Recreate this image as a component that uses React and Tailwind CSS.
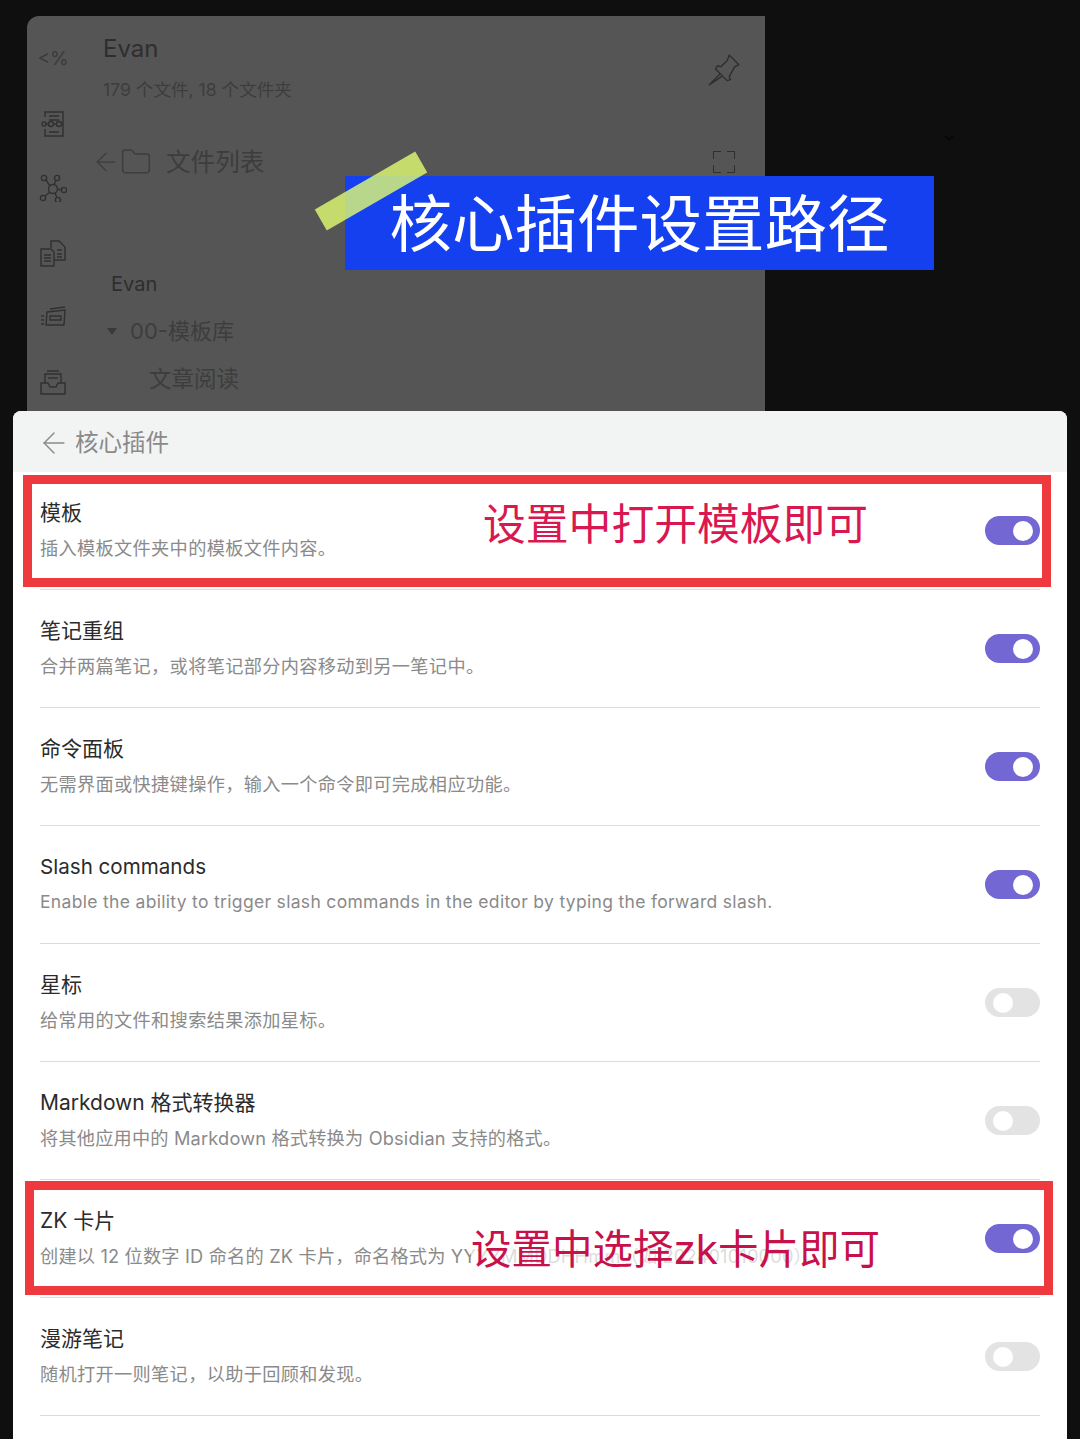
import React from "react";
import { ArrowLeft, Folder, ChevronDown } from "lucide-react";

const FONT = "font-['Inter','Noto_Sans_CJK_SC',sans-serif]";

const plugins = [
  { title: "模板", desc: "插入模板文件夹中的模板文件内容。", on: true },
  { title: "笔记重组", desc: "合并两篇笔记，或将笔记部分内容移动到另一笔记中。", on: true },
  { title: "命令面板", desc: "无需界面或快捷键操作，输入一个命令即可完成相应功能。", on: true },
  {
    title: "Slash commands",
    desc: "Enable the ability to trigger slash commands in the editor by typing the forward slash.",
    on: true,
    latin: true,
  },
  { title: "星标", desc: "给常用的文件和搜索结果添加星标。", on: false },
  { title: "Markdown 格式转换器", desc: "将其他应用中的 Markdown 格式转换为 Obsidian 支持的格式。", on: false, mixed: true },
  { title: "ZK 卡片", desc: "创建以 12 位数字 ID 命名的 ZK 卡片，命名格式为 YYYYMMDDHHmm（如 202401010000）。", on: true, mixed: true },
  { title: "漫游笔记", desc: "随机打开一则笔记，以助于回顾和发现。", on: false },
];

const Toggle = ({ on }) => (
  <div
    className={`flex h-[29px] w-[55px] shrink-0 items-center rounded-full ${
      on ? "justify-end bg-[#7367d3] pr-[7px]" : "justify-start bg-[#e3e3e3] pl-2"
    }`}
  >
    <div className="h-5 w-5 rounded-full bg-white" />
  </div>
);

const PluginRow = ({ title, desc, on, latin, mixed }) => {
  let descSize = "text-[18.2px] tracking-[0.33px]";
  if (latin) descSize = "text-[17.5px] tracking-[0.32px]";
  if (mixed) descSize = "text-[18.2px] tracking-[0.19px]";

  return (
    <div className="flex h-[118px] items-center justify-between border-b border-[#dcdcdc]">
      <div className="flex flex-col gap-[5px]">
        <div className={`leading-[30px] text-[#2b2b2b] ${latin ? "text-[20.6px]" : "text-[21px]"}`}>{title}</div>
        <div className={`leading-[30px] text-[#8a8a8a] ${descSize}`}>{desc}</div>
      </div>
      <Toggle on={on} />
    </div>
  );
};

// sidebar icons, the templater one is plain text
const IconBase = ({ children }) => (
  <svg viewBox="0 0 28 28" className="h-7 w-7" fill="none" stroke="#303030" strokeWidth="1.4">
    {children}
  </svg>
);

const sidebarIcons = [
  <IconBase key="doc">
    <path d="M6 8V3h18v24H6v-7" />
    <path d="M10 7h10M10 11h10M10 23h10" />
    <circle cx="5" cy="15" r="2" />
    <circle cx="12" cy="15" r="2.5" />
    <circle cx="20" cy="15" r="2.5" />
    <path d="M7 15h2.5M14.5 15h3" />
  </IconBase>,
  <IconBase key="graph">
    <circle cx="14" cy="15" r="4.5" />
    <circle cx="5" cy="4" r="2.6" />
    <circle cx="18" cy="4" r="2.6" />
    <circle cx="4" cy="24" r="2.6" />
    <circle cx="25" cy="16" r="2.6" />
    <circle cx="19" cy="26" r="2.6" />
    <path d="M7 6l4 6M17 6.500l-2 4M6 22l5-4M18.500 15.500h4M16 19l2 4.500" />
  </IconBase>,
  <IconBase key="files">
    <path d="M2 10h10l3 3v14H2z" />
    <path d="M12 9V2h8l6 6v13H15" />
    <path d="M5 16h7M5 19h7M5 22h7M18 11h5M18 15h5M18 18h5" />
  </IconBase>,
  <IconBase key="cards">
    <path d="M8 8l18-2-1 15H7z" />
    <path d="M11 5l15-2" />
    <path d="M11 12h11v4H11z" />
    <path d="M2 12h3M2 16h3M2 20h3" />
  </IconBase>,
  <IconBase key="inbox">
    <path d="M6 14V5h16v9M8 2h12" />
    <path d="M2 14h7l2 4h6l2-4h7v11H2z" />
    <path d="M9 9h10" />
  </IconBase>,
];

const PushPin = () => (
  <svg viewBox="0 0 32 32" className="mt-[20px] h-[34px] w-[34px]" fill="none" stroke="#2e2e2e" strokeWidth="1.3" strokeLinejoin="round">
    <path d="M21 2l9 9-4 2-5 9 1 3-3 1L8 15l2-3 3 1 6-6z" />
    <path d="M12 20L2 30l12-8" />
  </svg>
);

const App = () => {
  return (
    <div className={`${FONT} relative h-[1439px] w-[1080px] overflow-hidden bg-[#0f0f10]`}>
      {/* dimmed file explorer behind the sheet */}
      <div className="h-[411px] pl-[27px] pt-4">
        <div className="flex h-[395px] w-[738px] rounded-tl-xl bg-[#555555] text-[#2e2e2e]">
          <div className="flex w-[52px] flex-col items-center pt-[28px]">
            <div className="flex h-[30px] items-center text-[19px] text-[#3a3a3a]">&lt;%</div>
            <div className="mt-[35px] flex flex-col gap-[37px]">{sidebarIcons}</div>
          </div>

          <div className="flex flex-1 flex-col">
            <div className="flex items-start justify-between pl-6 pr-6 pt-[17px]">
              <div>
                <div className="text-[24px] leading-8">Evan</div>
                <div className="mt-[13px] text-[17.600px] leading-6 text-[#3d3d3d]">179 个文件, 18 个文件夹</div>
              </div>
              <PushPin />
            </div>

            <div className="mt-[44px] flex items-center justify-between pl-[12px] pr-[30px]">
              <div className="flex items-center text-[#3d3d3d]">
                <ArrowLeft className="h-[30px] w-[30px]" strokeWidth={1} />
                <Folder className="-ml-[1px] h-8 w-8" strokeWidth={1.1} />
                <span className="ml-[14px] text-[24.600px] leading-8">文件列表</span>
              </div>
              <div className="grid h-[22px] w-[22px] grid-cols-2 grid-rows-2 gap-[6px]">
                <div className="border-l border-t border-[#2e2e2e]" />
                <div className="border-r border-t border-[#2e2e2e]" />
                <div className="border-b border-l border-[#2e2e2e]" />
                <div className="border-b border-r border-[#2e2e2e]" />
              </div>
            </div>

            <div className="mt-[92px] pl-[32px] text-[20px] leading-7">Evan</div>
            <div className="mt-[19px] flex items-center pl-7 text-[22px] leading-7 text-[#3d3d3d]">
              <div className="h-0 w-0 border-x-[5px] border-t-[7px] border-x-transparent border-t-[#3a3a3a]" />
              <span className="ml-[13px]">00-模板库</span>
            </div>
            <div className="mt-5 pl-[70px] text-[22.500px] leading-7 text-[#3d3d3d]">文章阅读</div>
          </div>
        </div>
      </div>

      <ChevronDown className="absolute left-[941px] top-[130px] h-4 w-4 text-[#050505]" strokeWidth={2} />

      {/* core plugins sheet */}
      <div className="ml-[13px] h-[1028px] w-[1054px] overflow-hidden rounded-t-lg bg-white">
        <div className="flex h-[61px] items-center gap-1 bg-[#f2f3f3] pl-[24px] pt-[3px] text-[#8a8a8a]">
          <ArrowLeft className="h-[34px] w-[34px]" strokeWidth={1} />
          <span className="text-[23.500px]">核心插件</span>
        </div>
        <div className="px-[27px]">
          {plugins.map((p) => (
            <PluginRow key={p.title} {...p} />
          ))}
        </div>
      </div>

      {/* annotations on top of the screenshot */}
      <div className="absolute left-[345px] top-[176px] flex h-[94px] w-[589px] items-center justify-center bg-[#1440f0] pt-[2px] text-[62.500px] leading-none text-white">
        核心插件设置路径
      </div>
      <div className="absolute left-[313px] top-[179px] h-6 w-[116px] -rotate-[30deg] bg-[#e1fc72]/80" />

      <div className="absolute left-[23px] top-[475px] flex h-[112px] w-[1028px] items-center border-[9px] border-[#ee3a3f] pl-[451px]">
        <span className="mb-[12px] text-[42.800px] leading-none text-[#d9184f]">设置中打开模板即可</span>
      </div>
      <div className="absolute left-[25px] top-[1181px] flex h-[114px] w-[1028px] items-center border-[9px] border-[#ee3a3f] pl-[437px]">
        <span className="mt-[24px] bg-white/70 text-[40.500px] leading-none text-[#c8104a]">设置中选择zk卡片即可</span>
      </div>
    </div>
  );
};

export default App;
